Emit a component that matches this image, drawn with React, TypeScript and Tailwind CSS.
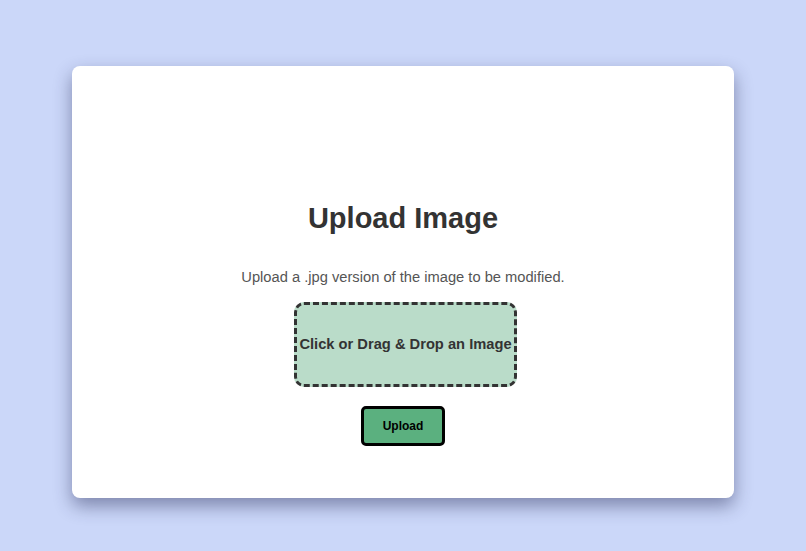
import React from 'react';

export default function App() {
  return (
    <div className="min-h-screen w-full bg-[#cbd7f9] pt-[66px] font-['Liberation_Sans',Arial,sans-serif]">
      <div className="mx-auto flex h-[432px] w-[662px] flex-col items-center rounded-lg bg-white pt-[135px] shadow-[0_8px_18px_rgba(30,35,80,0.45)]">
        <h1 className="text-[29px] font-bold leading-[34px] text-[#333]">Upload Image</h1>
        <p className="mt-[33px] text-[14.7px] leading-[18px] text-[#555]">
          Upload a .jpg version of the image to be modified.
        </p>
        <div className="ml-[5px] mt-[16px] flex h-[85px] w-[223px] cursor-pointer items-center justify-center rounded-[10px] border-[3px] border-dashed border-[#333] bg-[#badcc9]">
          <span className="whitespace-nowrap text-[14.7px] font-bold text-[#333]">
            Click or Drag &amp; Drop an Image
          </span>
        </div>
        <button className="mt-[19px] h-[40px] w-[84px] rounded-[5px] border-[3px] border-black bg-[#5bb07f] text-[12px] font-bold text-black">
          Upload
        </button>
      </div>
    </div>
  );
}
